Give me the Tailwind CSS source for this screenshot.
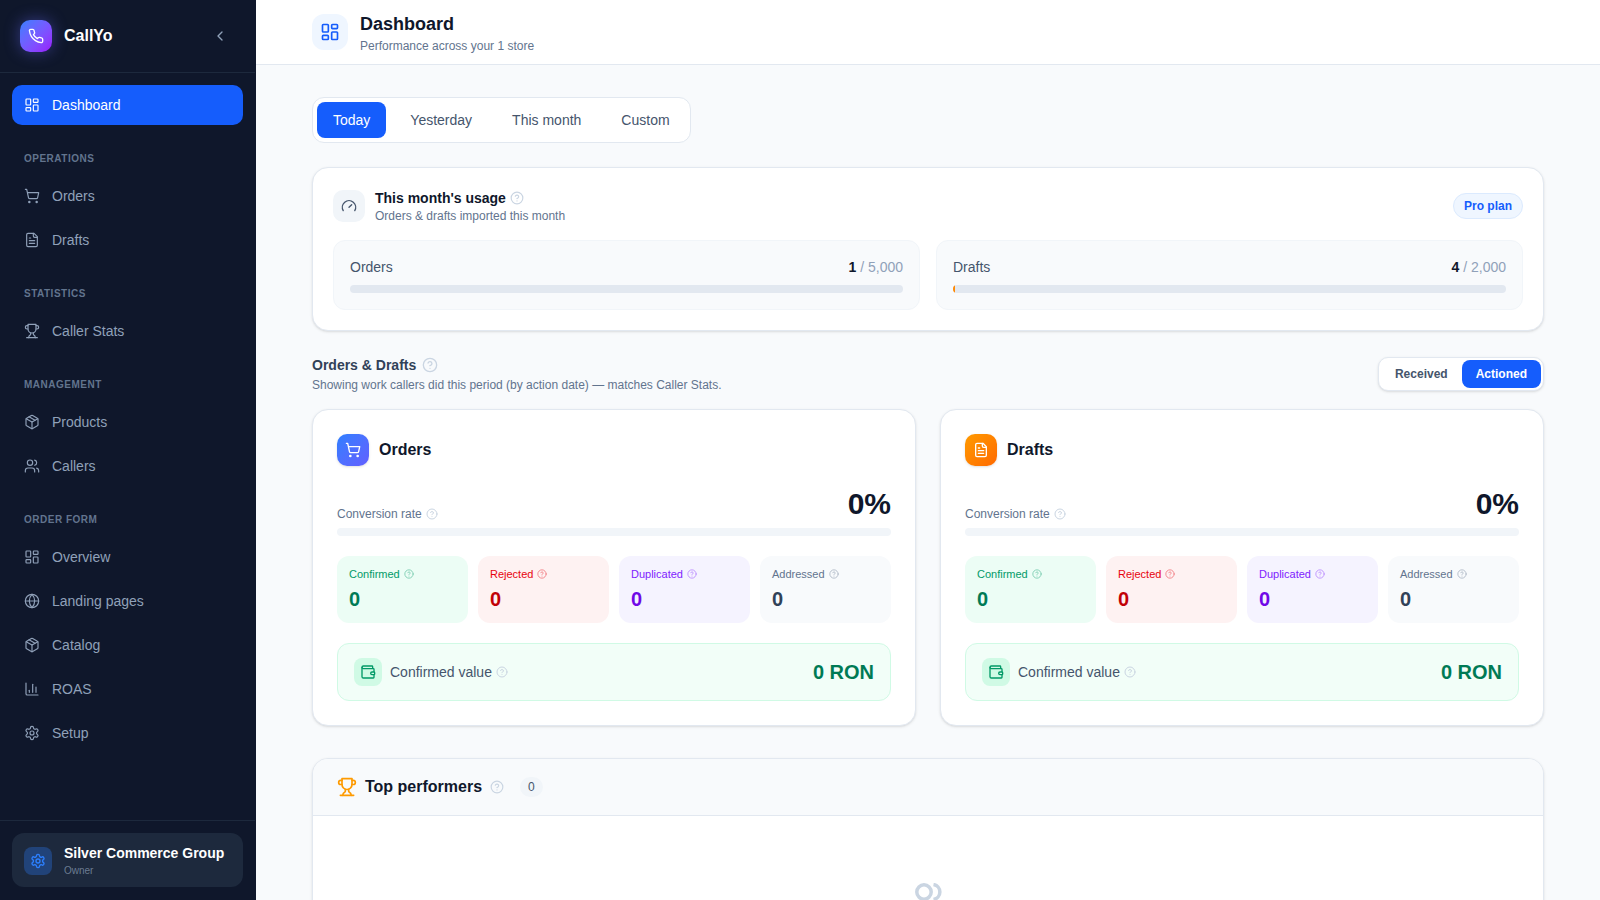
<!doctype html>
<html lang="en">
  <head>
    <meta charset="utf-8" />
    <meta name="viewport" content="width=device-width, initial-scale=1" />
    <script src="https://cdn.jsdelivr.net/npm/@tailwindcss/browser@4"></script>
    <title>CallYo Dashboard</title>
  </head>
  <body class="h-screen overflow-hidden flex bg-slate-50 font-['Liberation_Sans',Arial,sans-serif]">
    <!-- shared lucide icons -->
    <svg class="hidden">
      <symbol id="i-dash" viewBox="0 0 24 24"><rect x="3" y="3" width="7" height="9" rx="1"/><rect x="14" y="3" width="7" height="5" rx="1"/><rect x="14" y="12" width="7" height="9" rx="1"/><rect x="3" y="16" width="7" height="5" rx="1"/></symbol>
      <symbol id="i-cart" viewBox="0 0 24 24"><circle cx="8" cy="21" r="1"/><circle cx="19" cy="21" r="1"/><path d="M2.05 2.05h2l2.66 12.42a2 2 0 0 0 2 1.58h9.78a2 2 0 0 0 1.95-1.57l1.65-7.43H5.12"/></symbol>
      <symbol id="i-file" viewBox="0 0 24 24"><path d="M15 2H6a2 2 0 0 0-2 2v16a2 2 0 0 0 2 2h12a2 2 0 0 0 2-2V7Z"/><path d="M14 2v4a2 2 0 0 0 2 2h4"/><path d="M10 9H8"/><path d="M16 13H8"/><path d="M16 17H8"/></symbol>
      <symbol id="i-trophy" viewBox="0 0 24 24"><path d="M6 9H4.5a2.5 2.5 0 0 1 0-5H6"/><path d="M18 9h1.5a2.5 2.5 0 0 0 0-5H18"/><path d="M4 22h16"/><path d="M10 14.66V17c0 .55-.47.98-.97 1.21C7.85 18.75 7 20.24 7 22"/><path d="M14 14.66V17c0 .55.47.98.97 1.21C16.15 18.75 17 20.24 17 22"/><path d="M18 2H6v7a6 6 0 0 0 12 0V2Z"/></symbol>
      <symbol id="i-box" viewBox="0 0 24 24"><path d="m7.5 4.27 9 5.15"/><path d="M21 8a2 2 0 0 0-1-1.73l-7-4a2 2 0 0 0-2 0l-7 4A2 2 0 0 0 3 8v8a2 2 0 0 0 1 1.73l7 4a2 2 0 0 0 2 0l7-4A2 2 0 0 0 21 16Z"/><path d="m3.3 7 8.7 5 8.7-5"/><path d="M12 22V12"/></symbol>
      <symbol id="i-users" viewBox="0 0 24 24"><path d="M16 21v-2a4 4 0 0 0-4-4H6a4 4 0 0 0-4 4v2"/><circle cx="9" cy="7" r="4"/><path d="M22 21v-2a4 4 0 0 0-3-3.87"/><path d="M16 3.13a4 4 0 0 1 0 7.75"/></symbol>
      <symbol id="i-globe" viewBox="0 0 24 24"><circle cx="12" cy="12" r="10"/><path d="M12 2a14.5 14.5 0 0 0 0 20 14.5 14.5 0 0 0 0-20"/><path d="M2 12h20"/></symbol>
      <symbol id="i-chart" viewBox="0 0 24 24"><path d="M3 3v16a2 2 0 0 0 2 2h16"/><path d="M18 17V9"/><path d="M13 17V5"/><path d="M8 17v-3"/></symbol>
      <symbol id="i-gear" viewBox="0 0 24 24"><path d="M12.22 2h-.44a2 2 0 0 0-2 2v.18a2 2 0 0 1-1 1.73l-.43.25a2 2 0 0 1-2 0l-.15-.08a2 2 0 0 0-2.73.73l-.22.38a2 2 0 0 0 .73 2.73l.15.1a2 2 0 0 1 1 1.72v.51a2 2 0 0 1-1 1.74l-.15.09a2 2 0 0 0-.73 2.73l.22.38a2 2 0 0 0 2.73.73l.15-.08a2 2 0 0 1 2 0l.43.25a2 2 0 0 1 1 1.73V20a2 2 0 0 0 2 2h.44a2 2 0 0 0 2-2v-.18a2 2 0 0 1 1-1.73l.43-.25a2 2 0 0 1 2 0l.15.08a2 2 0 0 0 2.73-.73l.22-.39a2 2 0 0 0-.73-2.73l-.15-.08a2 2 0 0 1-1-1.74v-.5a2 2 0 0 1 1-1.74l.15-.09a2 2 0 0 0 .73-2.73l-.22-.38a2 2 0 0 0-2.73-.73l-.15.08a2 2 0 0 1-2 0l-.43-.25a2 2 0 0 1-1-1.73V4a2 2 0 0 0-2-2z"/><circle cx="12" cy="12" r="3"/></symbol>
      <symbol id="i-help" viewBox="0 0 24 24"><circle cx="12" cy="12" r="10"/><path d="M9.09 9a3 3 0 0 1 5.83 1c0 2-3 3-3 3"/><path d="M12 17h.01"/></symbol>
      <symbol id="i-wallet" viewBox="0 0 24 24"><path d="M19 7V4a1 1 0 0 0-1-1H5a2 2 0 0 0 0 4h15a1 1 0 0 1 1 1v4h-3a2 2 0 0 0 0 4h3a1 1 0 0 0 1-1v-2a1 1 0 0 0-1-1"/><path d="M3 5v14a2 2 0 0 0 2 2h15a1 1 0 0 0 1-1v-4"/></symbol>
    </svg>

    <!-- sidebar -->
    <aside class="w-64 shrink-0 h-full flex flex-col bg-[#0f172b] border-r border-[#0f172b]">
      <div class="h-[73px] shrink-0 flex items-center px-5 border-b border-slate-800">
        <div class="w-8 h-8 rounded-[10px] flex items-center justify-center bg-linear-to-br from-blue-500 to-purple-600 shadow-[0_0_16px_rgba(99,102,241,0.45)] text-white">
          <svg class="w-4 h-4" fill="none" stroke="currentColor" stroke-width="2" stroke-linecap="round" stroke-linejoin="round" viewBox="0 0 24 24"><path d="M22 16.92v3a2 2 0 0 1-2.18 2 19.79 19.79 0 0 1-8.63-3.07 19.5 19.5 0 0 1-6-6 19.79 19.79 0 0 1-3.07-8.67A2 2 0 0 1 4.11 2h3a2 2 0 0 1 2 1.72 12.84 12.84 0 0 0 .7 2.81 2 2 0 0 1-.45 2.11L8.09 9.91a16 16 0 0 0 6 6l1.27-1.27a2 2 0 0 1 2.11-.45 12.84 12.84 0 0 0 2.81.7A2 2 0 0 1 22 16.92z"/></svg>
        </div>
        <span class="ml-3 text-base font-bold text-white">CallYo</span>
        <button class="ml-auto w-[30px] h-[30px] flex items-center justify-center text-slate-400">
          <svg class="w-4 h-4" fill="none" stroke="currentColor" stroke-width="2" stroke-linecap="round" stroke-linejoin="round" viewBox="0 0 24 24"><path d="m15 18-6-6 6-6"/></svg>
        </button>
      </div>

      <nav class="flex-1 px-3 pt-3 text-sm text-slate-400">
        <a class="h-10 flex items-center gap-3 px-3 rounded-[10px] bg-blue-600 text-white">
          <svg class="w-4 h-4" fill="none" stroke="currentColor" stroke-width="1.75" stroke-linecap="round" stroke-linejoin="round"><use href="#i-dash"/></svg>Dashboard
        </a>

        <p class="mt-[26px] mb-[9px] px-3 text-[10px] leading-4 font-bold tracking-wider text-slate-500">OPERATIONS</p>
        <div class="flex flex-col gap-1">
          <a class="h-10 flex items-center gap-3 px-3 rounded-[10px]"><svg class="w-4 h-4" fill="none" stroke="currentColor" stroke-width="1.75" stroke-linecap="round" stroke-linejoin="round"><use href="#i-cart"/></svg>Orders</a>
          <a class="h-10 flex items-center gap-3 px-3 rounded-[10px]"><svg class="w-4 h-4" fill="none" stroke="currentColor" stroke-width="1.75" stroke-linecap="round" stroke-linejoin="round"><use href="#i-file"/></svg>Drafts</a>
        </div>

        <p class="mt-[26px] mb-[9px] px-3 text-[10px] leading-4 font-bold tracking-wider text-slate-500">STATISTICS</p>
        <div class="flex flex-col gap-1">
          <a class="h-10 flex items-center gap-3 px-3 rounded-[10px]"><svg class="w-4 h-4" fill="none" stroke="currentColor" stroke-width="1.75" stroke-linecap="round" stroke-linejoin="round"><use href="#i-trophy"/></svg>Caller Stats</a>
        </div>

        <p class="mt-[26px] mb-[9px] px-3 text-[10px] leading-4 font-bold tracking-wider text-slate-500">MANAGEMENT</p>
        <div class="flex flex-col gap-1">
          <a class="h-10 flex items-center gap-3 px-3 rounded-[10px]"><svg class="w-4 h-4" fill="none" stroke="currentColor" stroke-width="1.75" stroke-linecap="round" stroke-linejoin="round"><use href="#i-box"/></svg>Products</a>
          <a class="h-10 flex items-center gap-3 px-3 rounded-[10px]"><svg class="w-4 h-4" fill="none" stroke="currentColor" stroke-width="1.75" stroke-linecap="round" stroke-linejoin="round"><use href="#i-users"/></svg>Callers</a>
        </div>

        <p class="mt-[26px] mb-[9px] px-3 text-[10px] leading-4 font-bold tracking-wider text-slate-500">ORDER FORM</p>
        <div class="flex flex-col gap-1">
          <a class="h-10 flex items-center gap-3 px-3 rounded-[10px]"><svg class="w-4 h-4" fill="none" stroke="currentColor" stroke-width="1.75" stroke-linecap="round" stroke-linejoin="round"><use href="#i-dash"/></svg>Overview</a>
          <a class="h-10 flex items-center gap-3 px-3 rounded-[10px]"><svg class="w-4 h-4" fill="none" stroke="currentColor" stroke-width="1.75" stroke-linecap="round" stroke-linejoin="round"><use href="#i-globe"/></svg>Landing pages</a>
          <a class="h-10 flex items-center gap-3 px-3 rounded-[10px]"><svg class="w-4 h-4" fill="none" stroke="currentColor" stroke-width="1.75" stroke-linecap="round" stroke-linejoin="round"><use href="#i-box"/></svg>Catalog</a>
          <a class="h-10 flex items-center gap-3 px-3 rounded-[10px]"><svg class="w-4 h-4" fill="none" stroke="currentColor" stroke-width="1.75" stroke-linecap="round" stroke-linejoin="round"><use href="#i-chart"/></svg>ROAS</a>
          <a class="h-10 flex items-center gap-3 px-3 rounded-[10px]"><svg class="w-4 h-4" fill="none" stroke="currentColor" stroke-width="1.75" stroke-linecap="round" stroke-linejoin="round"><use href="#i-gear"/></svg>Setup</a>
        </div>
      </nav>

      <div class="h-20 shrink-0 border-t border-slate-800 px-3 pt-3">
        <div class="flex items-center gap-3 px-3 pt-[10px] pb-[9px] rounded-xl bg-slate-800">
          <div class="w-7 h-7 rounded-lg bg-blue-500/30 flex items-center justify-center text-blue-500">
            <svg class="w-4 h-4" fill="none" stroke="currentColor" stroke-width="2" stroke-linecap="round" stroke-linejoin="round"><use href="#i-gear"/></svg>
          </div>
          <div>
            <p class="text-sm leading-5 font-bold text-white">Silver Commerce Group</p>
            <p class="mt-[1px] text-[10px] leading-[14px] text-slate-400/70">Owner</p>
          </div>
        </div>
      </div>
    </aside>

    <!-- main column -->
    <main class="flex-1 min-w-0 h-full overflow-hidden">
      <header class="h-[65px] bg-white border-b border-slate-200 px-14 flex items-center gap-3">
        <div class="w-9 h-9 rounded-xl bg-blue-50 flex items-center justify-center text-blue-600">
          <svg class="w-5 h-5" fill="none" stroke="currentColor" stroke-width="2" stroke-linecap="round" stroke-linejoin="round"><use href="#i-dash"/></svg>
        </div>
        <div>
          <h1 class="text-lg leading-7 font-bold text-slate-900">Dashboard</h1>
          <p class="text-xs leading-4 text-slate-500">Performance across your 1 store</p>
        </div>
      </header>

      <div class="px-14 pt-8">
        <!-- period tabs -->
        <div class="w-fit flex gap-2 p-[4px] bg-white border border-slate-200 rounded-xl text-sm text-slate-600">
          <button class="h-9 px-4 rounded-lg bg-blue-600 text-white">Today</button>
          <button class="h-9 px-4 rounded-lg">Yesterday</button>
          <button class="h-9 px-4 rounded-lg">This month</button>
          <button class="h-9 px-4 rounded-lg">Custom</button>
        </div>

        <!-- usage -->
        <section class="mt-6 p-5 bg-white border border-slate-200 rounded-2xl shadow-sm">
          <div class="flex items-center gap-[10px] mb-4">
            <div class="w-8 h-8 rounded-[10px] bg-slate-100 flex items-center justify-center text-slate-600">
              <svg class="w-4 h-4" fill="none" stroke="currentColor" stroke-width="2" stroke-linecap="round" stroke-linejoin="round" viewBox="0 0 24 24"><path d="m12 14 4-4"/><path d="M3.34 19a10 10 0 1 1 17.32 0"/></svg>
            </div>
            <div>
              <div class="flex items-center gap-1">
                <h2 class="text-sm leading-5 font-bold text-slate-900">This month's usage</h2>
                <svg class="w-3.5 h-3.5 text-slate-300" fill="none" stroke="currentColor" stroke-width="2" stroke-linecap="round" stroke-linejoin="round"><use href="#i-help"/></svg>
              </div>
              <p class="text-xs leading-4 text-slate-500">Orders &amp; drafts imported this month</p>
            </div>
            <span class="ml-auto px-[10px] py-1 rounded-full border border-blue-100 bg-blue-50 text-xs leading-4 font-bold text-blue-600">Pro plan</span>
          </div>
          <div class="grid grid-cols-2 gap-4">
            <div class="p-4 rounded-xl bg-slate-50 border border-slate-100">
              <div class="flex justify-between text-sm leading-5 mb-2">
                <span class="text-slate-600">Orders</span>
                <span class="text-slate-400"><b class="text-slate-900">1</b> / 5,000</span>
              </div>
              <div class="h-2 rounded-full bg-slate-200 overflow-hidden"></div>
            </div>
            <div class="p-4 rounded-xl bg-slate-50 border border-slate-100">
              <div class="flex justify-between text-sm leading-5 mb-2">
                <span class="text-slate-600">Drafts</span>
                <span class="text-slate-400"><b class="text-slate-900">4</b> / 2,000</span>
              </div>
              <div class="h-2 rounded-full bg-slate-200 overflow-hidden">
                <div class="h-full w-[1.5px] bg-orange-400"></div>
              </div>
            </div>
          </div>
        </section>

        <!-- orders & drafts heading -->
        <div class="mt-6 mb-4 flex items-center justify-between">
          <div>
            <div class="flex items-center gap-[6px]">
              <h2 class="text-sm leading-5 font-bold text-slate-700">Orders &amp; Drafts</h2>
              <svg class="w-4 h-4 text-slate-300" fill="none" stroke="currentColor" stroke-width="2" stroke-linecap="round" stroke-linejoin="round"><use href="#i-help"/></svg>
            </div>
            <p class="mt-[2px] text-xs leading-4 text-slate-500">Showing work callers did this period (by action date) — matches Caller Stats.</p>
          </div>
          <div class="flex p-[2px] bg-white border border-slate-200 rounded-[10px] shadow-sm text-xs font-bold">
            <button class="h-7 px-3.5 rounded-lg text-slate-600">Received</button>
            <button class="h-7 px-3.5 rounded-lg bg-blue-600 text-white">Actioned</button>
          </div>
        </div>

        <div class="grid grid-cols-2 gap-6">
          <!-- orders card -->
          <section class="p-6 bg-white border border-slate-200 rounded-2xl shadow-sm">
            <div class="flex items-center gap-[10px]">
              <div class="w-8 h-8 rounded-[10px] bg-linear-to-br from-blue-500 to-indigo-500 shadow-sm flex items-center justify-center text-white">
                <svg class="w-4 h-4" fill="none" stroke="currentColor" stroke-width="2" stroke-linecap="round" stroke-linejoin="round"><use href="#i-cart"/></svg>
              </div>
              <h3 class="text-base font-bold text-slate-900">Orders</h3>
            </div>
            <div class="mt-5 mb-1.5 flex items-end justify-between">
              <div class="flex items-center gap-1 text-xs leading-4 text-slate-500">Conversion rate
                <svg class="w-3 h-3 text-slate-300" fill="none" stroke="currentColor" stroke-width="2" stroke-linecap="round" stroke-linejoin="round"><use href="#i-help"/></svg>
              </div>
              <span class="text-3xl leading-9 font-bold text-slate-900">0%</span>
            </div>
            <div class="h-2 rounded-full bg-slate-100"></div>
            <div class="mt-5 grid grid-cols-4 gap-[10px]">
              <div class="h-[67px] px-3 pt-[10px] rounded-xl bg-emerald-50">
                <div class="flex items-center gap-1 text-[11px] leading-4 text-emerald-600">Confirmed
                  <svg class="w-2.5 h-2.5 opacity-50" fill="none" stroke="currentColor" stroke-width="2" stroke-linecap="round" stroke-linejoin="round"><use href="#i-help"/></svg>
                </div>
                <p class="mt-[2px] text-xl leading-[30px] font-bold text-emerald-700">0</p>
              </div>
              <div class="h-[67px] px-3 pt-[10px] rounded-xl bg-red-50">
                <div class="flex items-center gap-1 text-[11px] leading-4 text-red-600">Rejected
                  <svg class="w-2.5 h-2.5 opacity-50" fill="none" stroke="currentColor" stroke-width="2" stroke-linecap="round" stroke-linejoin="round"><use href="#i-help"/></svg>
                </div>
                <p class="mt-[2px] text-xl leading-[30px] font-bold text-red-700">0</p>
              </div>
              <div class="h-[67px] px-3 pt-[10px] rounded-xl bg-violet-50">
                <div class="flex items-center gap-1 text-[11px] leading-4 text-violet-600">Duplicated
                  <svg class="w-2.5 h-2.5 opacity-50" fill="none" stroke="currentColor" stroke-width="2" stroke-linecap="round" stroke-linejoin="round"><use href="#i-help"/></svg>
                </div>
                <p class="mt-[2px] text-xl leading-[30px] font-bold text-violet-700">0</p>
              </div>
              <div class="h-[67px] px-3 pt-[10px] rounded-xl bg-slate-50">
                <div class="flex items-center gap-1 text-[11px] leading-4 text-slate-500">Addressed
                  <svg class="w-2.5 h-2.5 opacity-50" fill="none" stroke="currentColor" stroke-width="2" stroke-linecap="round" stroke-linejoin="round"><use href="#i-help"/></svg>
                </div>
                <p class="mt-[2px] text-xl leading-[30px] font-bold text-slate-700">0</p>
              </div>
            </div>
            <div class="mt-5 h-[58px] px-4 flex items-center rounded-xl border border-emerald-100 bg-emerald-50/70">
              <div class="w-7 h-7 rounded-lg bg-emerald-100 flex items-center justify-center text-emerald-600">
                <svg class="w-4 h-4" fill="none" stroke="currentColor" stroke-width="2" stroke-linecap="round" stroke-linejoin="round"><use href="#i-wallet"/></svg>
              </div>
              <span class="ml-2 text-sm text-slate-600">Confirmed value</span>
              <svg class="ml-1 w-3 h-3 text-slate-300" fill="none" stroke="currentColor" stroke-width="2" stroke-linecap="round" stroke-linejoin="round"><use href="#i-help"/></svg>
              <span class="ml-auto text-xl font-bold text-emerald-700">0 RON</span>
            </div>
          </section>

          <!-- drafts card -->
          <section class="p-6 bg-white border border-slate-200 rounded-2xl shadow-sm">
            <div class="flex items-center gap-[10px]">
              <div class="w-8 h-8 rounded-[10px] bg-linear-to-br from-amber-500 to-orange-500 shadow-sm flex items-center justify-center text-white">
                <svg class="w-4 h-4" fill="none" stroke="currentColor" stroke-width="2" stroke-linecap="round" stroke-linejoin="round"><use href="#i-file"/></svg>
              </div>
              <h3 class="text-base font-bold text-slate-900">Drafts</h3>
            </div>
            <div class="mt-5 mb-1.5 flex items-end justify-between">
              <div class="flex items-center gap-1 text-xs leading-4 text-slate-500">Conversion rate
                <svg class="w-3 h-3 text-slate-300" fill="none" stroke="currentColor" stroke-width="2" stroke-linecap="round" stroke-linejoin="round"><use href="#i-help"/></svg>
              </div>
              <span class="text-3xl leading-9 font-bold text-slate-900">0%</span>
            </div>
            <div class="h-2 rounded-full bg-slate-100"></div>
            <div class="mt-5 grid grid-cols-4 gap-[10px]">
              <div class="h-[67px] px-3 pt-[10px] rounded-xl bg-emerald-50">
                <div class="flex items-center gap-1 text-[11px] leading-4 text-emerald-600">Confirmed
                  <svg class="w-2.5 h-2.5 opacity-50" fill="none" stroke="currentColor" stroke-width="2" stroke-linecap="round" stroke-linejoin="round"><use href="#i-help"/></svg>
                </div>
                <p class="mt-[2px] text-xl leading-[30px] font-bold text-emerald-700">0</p>
              </div>
              <div class="h-[67px] px-3 pt-[10px] rounded-xl bg-red-50">
                <div class="flex items-center gap-1 text-[11px] leading-4 text-red-600">Rejected
                  <svg class="w-2.5 h-2.5 opacity-50" fill="none" stroke="currentColor" stroke-width="2" stroke-linecap="round" stroke-linejoin="round"><use href="#i-help"/></svg>
                </div>
                <p class="mt-[2px] text-xl leading-[30px] font-bold text-red-700">0</p>
              </div>
              <div class="h-[67px] px-3 pt-[10px] rounded-xl bg-violet-50">
                <div class="flex items-center gap-1 text-[11px] leading-4 text-violet-600">Duplicated
                  <svg class="w-2.5 h-2.5 opacity-50" fill="none" stroke="currentColor" stroke-width="2" stroke-linecap="round" stroke-linejoin="round"><use href="#i-help"/></svg>
                </div>
                <p class="mt-[2px] text-xl leading-[30px] font-bold text-violet-700">0</p>
              </div>
              <div class="h-[67px] px-3 pt-[10px] rounded-xl bg-slate-50">
                <div class="flex items-center gap-1 text-[11px] leading-4 text-slate-500">Addressed
                  <svg class="w-2.5 h-2.5 opacity-50" fill="none" stroke="currentColor" stroke-width="2" stroke-linecap="round" stroke-linejoin="round"><use href="#i-help"/></svg>
                </div>
                <p class="mt-[2px] text-xl leading-[30px] font-bold text-slate-700">0</p>
              </div>
            </div>
            <div class="mt-5 h-[58px] px-4 flex items-center rounded-xl border border-emerald-100 bg-emerald-50/70">
              <div class="w-7 h-7 rounded-lg bg-emerald-100 flex items-center justify-center text-emerald-600">
                <svg class="w-4 h-4" fill="none" stroke="currentColor" stroke-width="2" stroke-linecap="round" stroke-linejoin="round"><use href="#i-wallet"/></svg>
              </div>
              <span class="ml-2 text-sm text-slate-600">Confirmed value</span>
              <svg class="ml-1 w-3 h-3 text-slate-300" fill="none" stroke="currentColor" stroke-width="2" stroke-linecap="round" stroke-linejoin="round"><use href="#i-help"/></svg>
              <span class="ml-auto text-xl font-bold text-emerald-700">0 RON</span>
            </div>
          </section>
        </div>

        <!-- top performers -->
        <section class="mt-8 bg-white border border-slate-200 rounded-2xl shadow-sm overflow-hidden">
          <div class="h-[57px] px-6 flex items-center bg-slate-50 border-b border-slate-200">
            <svg class="w-5 h-5 text-amber-500" fill="none" stroke="currentColor" stroke-width="2" stroke-linecap="round" stroke-linejoin="round"><use href="#i-trophy"/></svg>
            <h2 class="ml-2 text-base font-bold text-slate-900">Top performers</h2>
            <svg class="ml-2 w-3.5 h-3.5 text-slate-300" fill="none" stroke="currentColor" stroke-width="2" stroke-linecap="round" stroke-linejoin="round"><use href="#i-help"/></svg>
            <span class="ml-4 h-5 px-2 rounded-full bg-slate-100 text-xs leading-5 text-slate-600">0</span>
          </div>
          <div class="pt-[67px] pb-[67px]">
            <svg class="mx-auto w-7 h-[18px] text-slate-300" fill="none" stroke="currentColor" stroke-width="3.5" viewBox="0 0 28 18"><circle cx="10" cy="9" r="7.2"/><path d="M19.5 1.5A7.6 7.6 0 0 1 19.5 16.5"/></svg>
          </div>
        </section>
      </div>
    </main>
  </body>
</html>
